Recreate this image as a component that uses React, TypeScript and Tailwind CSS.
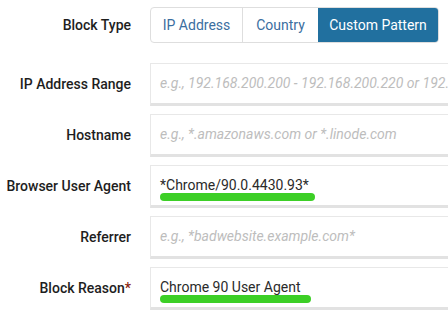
import React from "react";

const font = { fontFamily: "Roboto, 'Liberation Sans', sans-serif" };

function Row({
  label,
  required,
  children,
}: {
  label: string;
  required?: boolean;
  children: React.ReactNode;
}) {
  return (
    <div className="flex items-center h-[43px]">
      <div className="w-[131px] shrink-0 text-right text-[14px] font-medium text-[#1e1e1e]">
        {label}
        {required && <span className="text-[#8a1f11]">*</span>}
      </div>
      <div className="ml-[19px] shrink-0">{children}</div>
    </div>
  );
}

function Field({
  placeholder,
  value,
  underline,
}: {
  placeholder?: string;
  value?: string;
  underline?: number;
}) {
  return (
    <div className="relative w-[330px] h-[43px] overflow-hidden bg-white border border-[#e8e8e8] border-b-[3px] border-b-[#e2e2e2] flex items-center pl-[9px]">
      {value ? (
        <span className="text-[14px] text-[#2a2a2a] whitespace-nowrap">{value}</span>
      ) : (
        <span className="text-[14px] italic text-[#bdbdbd] whitespace-nowrap">{placeholder}</span>
      )}
      {underline ? (
        <div
          className="absolute left-[9px] top-[27px] h-[8px] rounded-full bg-[#3ccf26]"
          style={{ width: underline }}
        />
      ) : null}
    </div>
  );
}

export default function App() {
  return (
    <div className="w-[448px] h-[320px] overflow-hidden bg-white" style={font}>
      <div className="flex items-center pt-[7px] h-[43px]">
        <div className="w-[131px] shrink-0 text-right text-[14px] font-medium text-[#1e1e1e]">
          Block Type
        </div>
        <div className="ml-[19px] flex h-[36px] rounded-[4px] border border-[#dedede] overflow-hidden text-[14px]">
          <div className="w-[92px] flex items-center justify-center text-[#3b6ea0] border-r border-[#dedede]">
            IP Address
          </div>
          <div className="w-[75px] flex items-center justify-center text-[#3b6ea0]">
            Country
          </div>
          <div className="w-[120px] flex items-center justify-center bg-[#21709f] text-white">
            Custom Pattern
          </div>
        </div>
      </div>
      <div className="flex flex-col gap-[8px] mt-[20px]">
        <Row label="IP Address Range">
          <Field placeholder="e.g., 192.168.200.200 - 192.168.200.220 or 192.168.200.0/24" />
        </Row>
        <Row label="Hostname">
          <Field placeholder="e.g., *.amazonaws.com or *.linode.com" />
        </Row>
        <Row label="Browser User Agent">
          <Field value="*Chrome/90.0.4430.93*" underline={155} />
        </Row>
        <Row label="Referrer">
          <Field placeholder="e.g., *badwebsite.example.com*" />
        </Row>
        <Row label="Block Reason" required>
          <Field value="Chrome 90 User Agent" underline={151} />
        </Row>
      </div>
    </div>
  );
}
